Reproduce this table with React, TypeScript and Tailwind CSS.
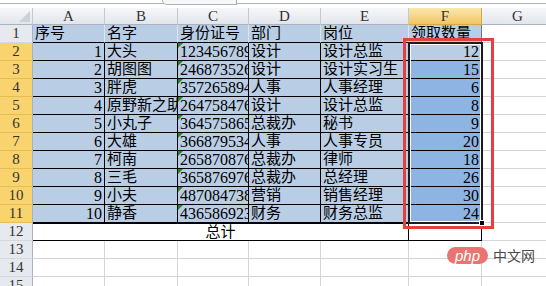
import React from 'react';

type Row = [number, string, string, string, string, number];

const rows: Row[] = [
  [1, '大头', '123456789012345678', '设计', '设计总监', 12],
  [2, '胡图图', '246873526012345678', '设计', '设计实习生', 15],
  [3, '胖虎', '357265894012345678', '人事', '人事经理', 6],
  [4, '原野新之助', '264758476012345678', '设计', '设计总监', 8],
  [5, '小丸子', '364575865012345678', '总裁办', '秘书', 9],
  [6, '大雄', '366879534012345678', '人事', '人事专员', 20],
  [7, '柯南', '265870876012345678', '总裁办', '律师', 18],
  [8, '三毛', '365876976012345678', '总裁办', '总经理', 26],
  [9, '小夫', '487084738012345678', '营销', '销售经理', 30],
  [10, '静香', '436586923012345678', '财务', '财务总监', 24],
];

const letters = ['A', 'B', 'C', 'D', 'E', 'F', 'G'];

const cell = 'h-[18px] overflow-hidden whitespace-nowrap px-[2px] leading-[17px] text-[15px]';
const rowHead =
  'h-[18px] flex items-center justify-center text-[15px] leading-[17px] text-[#333] border-r border-b border-r-[#a9b3bf]';

function GreenTick() {
  return (
    <span className="absolute left-0 top-0 h-0 w-0 border-t-[5px] border-r-[5px] border-t-[#1f8a1f] border-r-transparent" />
  );
}

export default function App() {
  return (
    <div
      className="relative h-[286px] w-[546px] overflow-hidden bg-white text-black"
      style={{ fontFamily: '"Liberation Serif", "Noto Sans CJK SC", serif' }}
    >
      {/* formula bar edge */}
      <div className="relative h-[8px] bg-white">
        <div className="absolute left-0 right-0 top-[3px] h-px bg-[#aab1ba]" />
        <div className="absolute left-[162px] top-0 h-[5px] w-[75px] rounded-bl-[6px] border-b border-l border-r border-[#aab1ba] bg-[#f7f7f7]" />
      </div>

      <div className="grid grid-cols-[33px_72px_73px_71px_72px_88px_73px_72px]">
        {/* column headers */}
        <div className="relative h-[17px] border-r border-b border-r-[#c3c9d1] border-b-[#a9b3bf] bg-gradient-to-b from-[#f6f7f9] to-[#e2e5ea]">
          <svg className="absolute right-[2px] bottom-[2px]" width="11" height="11" viewBox="0 0 11 11">
            <polygon points="11,0 11,11 0,11" fill="#cdd1d6" />
          </svg>
        </div>
        {letters.map((l) => (
          <div
            key={l}
            className={`flex h-[17px] items-center justify-center border-r border-b text-[15px] leading-[17px] text-[#333] ${
              l === 'F'
                ? 'border-r-[#d9a64a] border-b-[#d9a64a] bg-gradient-to-b from-[#fbe7ae] to-[#f2c560]'
                : 'border-r-[#c3c9d1] border-b-[#a9b3bf] bg-gradient-to-b from-[#f6f7f9] to-[#e2e5ea]'
            }`}
          >
            {l}
          </div>
        ))}

        {/* row 1 */}
        <div className={`${rowHead} border-b-[#d3d8df] bg-[#e6e9ee]`}>1</div>
        {['序号', '名字', '身份证号', '部门', '岗位', '领取数量'].map((t, i) => (
          <div
            key={t}
            className={`${cell} border-r border-b border-b-black bg-[#b9cde5] ${
              i === 5 ? 'border-r-[#6d7a89]' : 'border-r-[#dde5ef]'
            }`}
          >
            {t}
          </div>
        ))}
        <div className={`${cell} border-r border-b border-[#d4d4d4]`} />

        {/* data rows */}
        {rows.map(([n, name, id, dept, pos, qty], r) => (
          <React.Fragment key={n}>
            <div className={`${rowHead} border-b-[#e6bd55] bg-[#f9d46e]`}>{r + 2}</div>
            <div className={`${cell} border-r border-b border-black bg-[#b9cde5] text-right text-[16px]`}>{n}</div>
            <div className={`${cell} border-r border-b border-black bg-[#b9cde5]`}>{name}</div>
            <div className={`${cell} relative border-r border-b border-black bg-[#b9cde5] text-[16px]`}>
              <GreenTick />
              {id}
            </div>
            <div className={`${cell} border-r border-b border-black bg-[#b9cde5]`}>{dept}</div>
            <div className={`${cell} border-r border-b border-black bg-[#b9cde5]`}>{pos}</div>
            <div
              className={`${cell} border-r border-b border-black text-right text-[16px] ${
                r === 0 ? 'bg-[#b9cde5]' : 'bg-[#8db4e3]'
              }`}
            >
              {qty}
            </div>
            <div className={`${cell} border-r border-b border-[#d4d4d4]`} />
          </React.Fragment>
        ))}

        {/* row 12 total */}
        <div className={`${rowHead} border-b-[#d3d8df] bg-[#e6e9ee]`}>12</div>
        <div className={`${cell} col-span-5 border-t border-r border-b border-black text-center leading-[16px]`}>
          总计
        </div>
        <div className={`${cell} border-t border-r border-b border-black`} />
        <div className={`${cell} border-r border-b border-[#d4d4d4]`} />

        {/* empty rows */}
        {[13, 14, 15].map((n) => (
          <React.Fragment key={n}>
            <div className={`${rowHead} border-b-[#d3d8df] bg-[#e6e9ee]`}>{n}</div>
            {letters.map((l) => (
              <div key={l} className={`${cell} border-r border-b border-[#d4d4d4]`} />
            ))}
          </React.Fragment>
        ))}
      </div>

      {/* selection F2:F11 */}
      <div className="absolute left-[408px] top-[42px] h-[182px] w-[75px] border-2 border-[#1c1c1c] shadow-[inset_0_0_0_1px_#ffffff]" />
      <div className="absolute left-[479px] top-[220px] h-[6px] w-[6px] border border-white bg-black" />

      {/* highlight box */}
      <div className="absolute left-[403px] top-[38px] h-[191px] w-[91px] border-[3px] border-[#e3403f]" />

      {/* watermark */}
      <div className="absolute left-[447px] top-[247px] flex h-[17px] w-[41px] items-center justify-center rounded-full bg-[#ea7471]">
        <span
          className="text-[15px] italic leading-none text-white"
          style={{ fontFamily: '"Liberation Sans", sans-serif' }}
        >
          php
        </span>
      </div>
      <div
        className="absolute left-[493px] top-[246px] text-[14px] leading-[18px] text-[#4a4a4a]"
        style={{ fontFamily: '"Noto Sans CJK SC", sans-serif' }}
      >
        中文网
      </div>
    </div>
  );
}
